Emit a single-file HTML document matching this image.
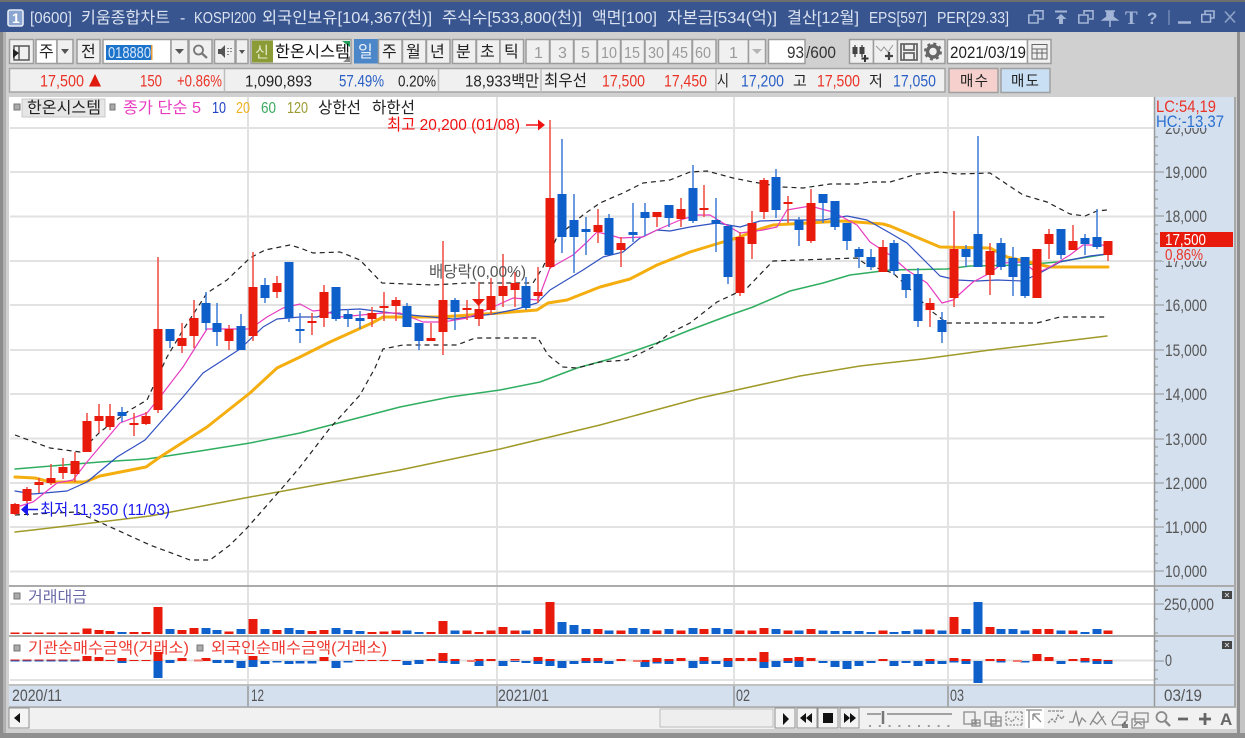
<!DOCTYPE html>
<html lang="ko"><head><meta charset="utf-8"><title>키움종합차트</title>
<style>
html,body{margin:0;padding:0;width:1245px;height:738px;overflow:hidden;background:#d0d0d0}
svg{display:block;font-family:"Liberation Sans","Noto Sans CJK KR",sans-serif;filter:blur(.3px)}
.b{fill:#f0f0f0;stroke:#9c9c9c;stroke-width:1.5}
.w{fill:#fff;stroke:#9c9c9c;stroke-width:1.5}
</style></head><body>
<svg width="1245" height="738" viewBox="0 0 1245 738" xmlns="http://www.w3.org/2000/svg">
<!-- window -->
<rect width="1245" height="738" fill="#d0d0d0"/>
<rect x="0" y="0" width="3" height="738" fill="#8c8c8c"/>
<rect x="3" y="32" width="3" height="706" fill="#b0b0b0"/>
<rect x="1237" y="32" width="3" height="706" fill="#8f8f8f"/>
<rect x="1240" y="32" width="5" height="706" fill="#c4c4c4"/>
<rect y="733" width="1245" height="5" fill="#8f8f8f"/>
<rect width="1245" height="2" fill="#6e6e6e"/>
<rect y="2" width="1245" height="30" fill="#385590"/>
<!-- title -->
<rect x="8" y="10" width="15" height="16" rx="2" fill="#8aa5d0" stroke="#e6ecf5" stroke-width="1.600"/>
<text x="12" y="23" font-size="14" font-weight="bold" fill="#fff">1</text>
<g fill="#dbe3f0" font-size="16">
<text x="30" y="23" textLength="42" lengthAdjust="spacingAndGlyphs">[0600]</text>
<text x="81" y="23" textLength="89" lengthAdjust="spacingAndGlyphs">키움종합차트</text>
<text x="180" y="23">-</text>
<text x="194" y="23" textLength="62" lengthAdjust="spacingAndGlyphs">KOSPI200</text>
<text x="262" y="23" textLength="170" lengthAdjust="spacingAndGlyphs">외국인보유[104,367(천)]</text>
<text x="442" y="23" textLength="140" lengthAdjust="spacingAndGlyphs">주식수[533,800(천)]</text>
<text x="592" y="23" textLength="65" lengthAdjust="spacingAndGlyphs">액면[100]</text>
<text x="667" y="23" textLength="110" lengthAdjust="spacingAndGlyphs">자본금[534(억)]</text>
<text x="787" y="23" textLength="72" lengthAdjust="spacingAndGlyphs">결산[12월]</text>
<text x="869" y="23" textLength="58" lengthAdjust="spacingAndGlyphs">EPS[597]</text>
<text x="937" y="23" textLength="72" lengthAdjust="spacingAndGlyphs">PER[29.33]</text>
</g>
<g fill="none" stroke="#a3b5d6" stroke-width="1.600">
<path d="M1034 14V10.800H1043V19H1038M1028.800 15H1038V23H1028.800Z"/>
<path d="M1055 11.500H1067" stroke-width="2"/>
<path d="M1061 14L1055.500 19H1059V24H1063V19H1066.500Z" fill="#a3b5d6" stroke="none"/>
<path d="M1084 14V10.800H1093V19H1089M1078.800 15H1088V23H1078.800Z"/>
<path d="M1105 11H1115M1107 11V17L1103 20H1117L1113 17V11ZM1110 20V27" fill="#a3b5d6"/>
<path d="M1169 10V25" stroke="#6f86b3"/>
<path d="M1178 22.500H1191" stroke-width="2.500"/>
<path d="M1205 14V11H1214V18H1211M1201.800 14.500H1210.500V22H1201.800Z"/>
<path d="M1225 11.500L1235 22.500M1235 11.500L1225 22.500" stroke="#8fa3c8"/>
</g>
<text x="1125" y="24" font-size="19" font-weight="bold" font-family="Liberation Serif,serif" fill="#a3b5d6">T</text>
<text x="1147" y="24" font-size="17" font-weight="bold" fill="#a3b5d6">?</text>

<!-- toolbar row 1 -->
<g>
<rect class="b" x="9.500" y="39.500" width="24" height="24"/>
<path d="M14 46H29V60H14ZM19 46V60" fill="none" stroke="#555" stroke-width="1.500"/><path d="M13 49L19 53L13 58Z" fill="#222"/>
<rect class="w" x="36" y="39.500" width="21" height="24"/><rect class="b" x="57" y="39.500" width="16" height="24"/>
<path d="M61 49H69L65 54Z" fill="#555"/>
<rect class="b" x="77" y="39.500" width="23" height="24"/>
<rect class="w" x="103" y="39.500" width="68" height="24"/>
<rect x="106" y="45" width="46" height="15" fill="#1b73cc"/>
<rect x="151" y="45" width="1.500" height="15" fill="#e79a3a"/>
<rect class="b" x="171" y="39.500" width="17" height="24"/><path d="M175 49H184L179.500 54Z" fill="#555"/>
<rect class="b" x="189" y="39.500" width="23" height="24"/>
<circle cx="198.500" cy="50" r="4.500" fill="none" stroke="#777" stroke-width="1.800"/><path d="M202 53.500L207 58" stroke="#777" stroke-width="2.200"/>
<rect class="b" x="214.500" y="39.500" width="20.500" height="24"/>
<path d="M218 49H221L225 45V58L221 54H218Z" fill="#555"/><path d="M228 48v1M231 48v1M228 51v1M231 51v1M228 54v1" stroke="#666" stroke-width="1.500"/>
<rect class="b" x="236" y="39.500" width="12" height="24"/><path d="M239 50H245L242 54Z" fill="#555"/>
<rect class="w" x="251" y="39.500" width="100" height="24"/>
<rect x="252" y="40.500" width="21" height="22" fill="#8b9b35"/>
<path d="M342 41H350V47Z" fill="#1fa25a"/><path d="M343 62L350 62L350 56Z" fill="#888"/>
<rect x="354" y="39" width="24" height="24.500" fill="#4a86c8"/>
<rect class="b" x="378.500" y="39.500" width="23.500" height="24"/>
<rect class="b" x="402.500" y="39.500" width="23.500" height="24"/>
<rect class="b" x="426.500" y="39.500" width="23.500" height="24"/>
<rect class="b" x="452.500" y="39.500" width="23.500" height="24"/>
<rect class="b" x="476.500" y="39.500" width="23.500" height="24"/>
<rect class="b" x="500" y="39.500" width="23.500" height="24"/>
<rect class="b" x="526" y="39.500" width="23.500" height="24"/>
<rect class="b" x="550" y="39.500" width="23.500" height="24"/>
<rect class="b" x="574" y="39.500" width="23" height="24"/>
<rect class="b" x="597.500" y="39.500" width="23" height="24"/>
<rect class="b" x="621" y="39.500" width="23.500" height="24"/>
<rect class="b" x="645" y="39.500" width="23" height="24"/>
<rect class="b" x="668.500" y="39.500" width="23.500" height="24"/>
<rect class="b" x="692.500" y="39.500" width="23.500" height="24"/>
<rect class="b" x="718.500" y="39.500" width="30" height="24"/>
<rect class="b" x="748.500" y="39.500" width="17" height="24"/><path d="M752 49H762L757 54Z" fill="#b4b4b4"/>
<rect class="w" x="768.500" y="39.500" width="36.500" height="24"/>
<rect class="b" x="849.500" y="39.500" width="24" height="24"/>
<rect class="b" x="873.500" y="39.500" width="24" height="24"/>
<rect class="b" x="897.500" y="39.500" width="24" height="24"/>
<rect class="b" x="921.500" y="39.500" width="23.500" height="24"/>
<rect class="w" x="947.500" y="39.500" width="80" height="24"/>
<rect class="b" x="1027.500" y="39.500" width="23.500" height="24"/>
<!-- candle add icon -->
<path d="M855 45V57M862 45V57" stroke="#333" stroke-width="1.200"/><path d="M852.500 47H857.500V54H852.500ZM859.500 47H864.500V54H859.500Z" fill="#444"/><path d="M865 55V62M861.500 58.500H868.500" stroke="#333" stroke-width="2"/>
<path d="M876 46L881 51L884 47L888 52L893 45" fill="none" stroke="#999"/><path d="M889 52V60M885 56H893" stroke="#444" stroke-width="2.200"/>
<path d="M901 44H917V60H901ZM904 44V50H914V44M904 60V53H914V60" fill="none" stroke="#666" stroke-width="1.800"/>
<circle cx="933" cy="51.500" r="5.500" fill="none" stroke="#666" stroke-width="3.500"/><circle cx="933" cy="51.500" r="8" fill="none" stroke="#666" stroke-width="2" stroke-dasharray="3 3.300"/>
<path d="M1032 44.500H1047V59H1032ZM1032 49H1047M1032 53H1047M1037 49V59M1042 49V59" fill="none" stroke="#666"/>
</g>
<g font-size="16" fill="#222">
<text x="39" y="57">주</text><text x="81" y="57">전</text>
<text x="108" y="58" fill="#dceaf8" textLength="43" lengthAdjust="spacingAndGlyphs">018880</text>
<text x="255" y="57" fill="#e8eccb" font-size="15">신</text>
<text x="275" y="57" textLength="75" lengthAdjust="spacingAndGlyphs" fill="#111">한온시스템</text>
<text x="358" y="57" fill="#e8f0fa">일</text><text x="382" y="57">주</text><text x="406" y="57">월</text><text x="430" y="57">년</text>
<text x="456" y="57">분</text><text x="480" y="57">초</text><text x="504" y="57">틱</text>
</g>
<g font-size="16" fill="#9a9a9a">
<text x="534" y="58">1</text><text x="558" y="58">3</text><text x="581" y="58">5</text>
<text x="601" y="58" textLength="16" lengthAdjust="spacingAndGlyphs">10</text><text x="624" y="58" textLength="16" lengthAdjust="spacingAndGlyphs">15</text><text x="648" y="58" textLength="16" lengthAdjust="spacingAndGlyphs">30</text><text x="672" y="58" textLength="16" lengthAdjust="spacingAndGlyphs">45</text><text x="695" y="58" textLength="16" lengthAdjust="spacingAndGlyphs">60</text>
<text x="729" y="58">1</text>
</g>
<g font-size="16.500" fill="#333">
<text x="787" y="58" textLength="17" lengthAdjust="spacingAndGlyphs">93</text>
<text x="806" y="58" textLength="30" lengthAdjust="spacingAndGlyphs">/600</text>
<text x="950" y="58" textLength="76" lengthAdjust="spacingAndGlyphs" fill="#222">2021/03/19</text>
</g>

<!-- toolbar row 2 -->
<rect x="9.500" y="68.500" width="935.500" height="23.500" fill="#f0f0f0" stroke="#a5a5a5" stroke-width="1.500"/>
<path d="M224.500 69V92M438.500 69V92M541 69V92M716 69V92" stroke="#bdbdbd" stroke-width="1.500"/>
<rect x="949" y="68.500" width="49" height="24" fill="#f5d0cc" stroke="#a0a0a0" stroke-width="1.500"/>
<rect x="1001" y="68.500" width="49" height="24" fill="#c8dff4" stroke="#a0a0a0" stroke-width="1.500"/>
<path d="M95 74L101 86.500H89Z" fill="#e01a0c"/>
<g font-size="16.500" fill="#ea3326">
<text x="40" y="86.500" textLength="44" lengthAdjust="spacingAndGlyphs">17,500</text>
<text x="140" y="86.500" textLength="22" lengthAdjust="spacingAndGlyphs">150</text>
<text x="177" y="86.500" textLength="45" lengthAdjust="spacingAndGlyphs">+0.86%</text>
<text x="602" y="86.500" textLength="43" lengthAdjust="spacingAndGlyphs">17,500</text>
<text x="664" y="86.500" textLength="43" lengthAdjust="spacingAndGlyphs">17,450</text>
<text x="817" y="86.500" textLength="43" lengthAdjust="spacingAndGlyphs">17,500</text>
</g>
<g font-size="16.500" fill="#2a5fc4">
<text x="339" y="86.500" textLength="45" lengthAdjust="spacingAndGlyphs">57.49%</text>
<text x="741" y="86.500" textLength="43" lengthAdjust="spacingAndGlyphs">17,200</text>
<text x="893" y="86.500" textLength="43" lengthAdjust="spacingAndGlyphs">17,050</text>
</g>
<g font-size="16" fill="#222">
<text x="245" y="86.500" textLength="67" lengthAdjust="spacingAndGlyphs">1,090,893</text>
<text x="398" y="86.500" textLength="38" lengthAdjust="spacingAndGlyphs">0.20%</text>
<text x="465" y="86.500" textLength="74" lengthAdjust="spacingAndGlyphs">18,933백만</text>
<text x="544" y="86" textLength="43" lengthAdjust="spacingAndGlyphs">최우선</text>
<text x="717" y="86" textLength="12" lengthAdjust="spacingAndGlyphs">시</text>
<text x="793" y="86" font-size="15">고</text><text x="869" y="86" font-size="15">저</text>
<text x="960" y="86" font-size="14.500" textLength="28" lengthAdjust="spacing">매수</text>
<text x="1011" y="86" font-size="14.500" textLength="28" lengthAdjust="spacing">매도</text>
</g>

<!-- chart frame -->
<rect x="9" y="97" width="1145" height="589" fill="#fff"/>
<rect x="1155" y="97" width="79" height="589" fill="#d5e0ef"/>
<rect x="9" y="686" width="1225" height="21" fill="#d5e0ef"/>
<g stroke="#e2e2e2" stroke-width="2" fill="none">
<path d="M10 128H1154M10 172H1154M10 216.500H1154M10 261H1154M10 305H1154M10 350H1154M10 394H1154M10 438.500H1154M10 483H1154M10 527H1154M10 571.500H1154M10 604H1154M10 660.500H1154M10 680H1154"/>
<path d="M248 97V685M497 97V685M734 97V685M948 97V685"/>
</g>
<!-- moving averages -->
<g fill="none" stroke-linejoin="round" stroke-linecap="round">
<polyline stroke="#a09a28" stroke-width="1.500" points="15,532 33,530 150,516 250,497 300,488 400,470 500,449 600,425 700,398 800,376 860,366 923,359 990,350 1057,342 1107,336"/>
<polyline stroke="#2fae60" stroke-width="1.500" points="15,469 100,462 147,459 200,451 250,443 300,433 350,420 400,407 450,397 500,390 540,382 577,368 610,359 637,350 660,342 690,330 730,315 753,307 790,291 823,283 850,275 890,270 947,269 970,266 1023,265 1057,262 1107,254"/>
<polyline stroke="#f5ae10" stroke-width="3" points="15,477 35,478 50,482 85,482 100,476 146,467 160,457 207,427 250,393 277,368 300,357 330,342 372,323 383,317 440,317 500,313 537,310 548,303 567,300 600,287 630,279 657,265 690,252 723,242 737,238 757,230 773,225 843,221 883,224 890,226 940,247 990,248 1007,257 1050,267 1108,267"/>
<polyline stroke="#3050c0" stroke-width="1.200" points="15,491 33,494 67,491 87,482 117,457 145,440 183,397 203,373 240,349 263,327 277,319 300,317 317,317 337,310 360,309 400,314 453,319 493,314 517,309 537,303 550,290 583,270 603,257 623,252 640,238 657,230 670,231 690,227 717,223 740,227 760,221 790,220 823,220 847,216 867,220 890,233 907,243 927,263 940,276 957,280 977,281 997,280 1023,281 1040,273 1060,262 1090,256 1107,254"/>
<polyline stroke="#e83cc0" stroke-width="1.200" points="20,506 33,502 57,483 73,480 87,462 103,443 120,423 133,418 147,413 160,397 183,367 207,329 250,329 267,317 283,308 300,304 313,311 323,310 340,317 383,313 400,313 423,322 443,322 467,318 493,307 513,298 538,300 550,268 573,255 586,243 597,232 610,235 620,238 643,237 657,230 680,220 697,215 710,215 723,223 740,233 763,230 777,227 787,210 810,206 833,212 857,225 870,242 890,255 907,270 927,283 942,303 953,300 973,282 990,273 1003,263 1023,262 1037,273 1050,267 1070,255 1083,245 1103,245 1108,250"/>
<g stroke="#222" stroke-width="1.200" stroke-dasharray="5 4" stroke-linecap="butt">
<polyline points="15,435 50,448 80,452 100,432 130,410 147,400 167,357 183,330 207,293 227,280 250,258 265,250 290,245 300,248 313,253 340,252 360,260 382,283 433,285 467,283 533,283 543,267 557,237 583,215 600,203 623,193 643,183 670,180 690,172 707,171 733,178 753,182 783,187 803,188 830,184 857,184 870,182 890,182 917,174 940,172 957,174 990,173 1023,195 1047,202 1070,214 1085,216 1097,211 1107,210"/>
<polyline points="15,515 77,512 117,530 150,545 190,560 210,560 230,545 247,528 283,487 300,467 330,428 360,395 375,368 383,349 403,345 457,345 475,338 538,338 548,355 563,367 577,368 600,362 627,360 653,347 670,333 690,323 717,302 747,288 773,261 857,258 867,265 893,273 913,292 930,310 947,323 990,323 1037,323 1060,317 1107,317"/>
</g>
</g>
<!-- wicks -->
<path stroke="#ef4a3e" stroke-width="1.500" fill="none" d="M15 503V515M27 487V503M39 478V493M51 464V485M63 458V479M75 452V482M87 413V452M99 404V433M110 404V430M134 413V436M146 412V425M158 257V413M182 323V353M194 300V348M229 325V350M253 252V341M277 276V298M312 313V335M324 285V327M372 307V327M384 292V321M396 297V321M431 323V341M443 241V355M467 300V320M479 282V326M491 278V315M503 254V307M515 272V307M538 267V303M550 120V269M598 209V243M621 237V267M657 212V227M681 198V227M704 185V217M740 232V296M752 211V259M764 178V219M788 196V223M811 189V243M883 240V272M930 298V327M954 211V307M990 243V295M1049 229V259M1073 225V250M1108 241V261"/>
<path stroke="#3d7ad6" stroke-width="1.500" fill="none" d="M122 407V422M170 329V348M206 292V330M217 303V346M241 314V350M265 278V303M289 262V322M300 313V343M336 287V321M348 309V327M360 311V329M407 303V327M419 323V350M455 298V330M526 277V310M562 139V253M574 194V273M586 217V255M609 214V255M633 203V242M645 203V236M669 205V227M693 165V223M716 198V252M728 226V284M776 169V218M799 217V246M823 194V223M835 201V230M847 223V250M859 247V268M871 249V270M894 240V275M906 274V298M918 268V327M942 312V343M966 245V267M978 136V267M1001 238V270M1013 247V296M1025 257V298M1061 229V259M1085 234V255M1097 209V249"/>
<!-- bodies -->
<path stroke="#e81a0c" stroke-width="9" fill="none" d="M15 504V514M27 489V501M39 482V485M51 478V483M63 467V473M75 461V474M87 421V452M99 416V421M110 416V427M134 423V425M146 416V424M158 329V410M182 338V346M194 318V336M229 329V341M253 287V336M277 283V292M312 321V323M324 292V318M372 313V319M384 306V308M396 300V306M431 338V341M443 300V332M467 308V310M479 309V319M491 296V310M503 286V296M515 283V290M538 292V296M550 198V267M598 225V232M621 243V250M657 212V217M681 209V219M704 208V210M740 237V293M752 223V244M764 180V212M788 202V204M811 203V241M883 247V272M930 303V310M954 249V298M990 251V275M1037 249V298M1049 234V244M1073 241V250M1108 241V255"/>
<path stroke="#0f5fcb" stroke-width="9" fill="none" d="M122 412V416M170 329V341M206 303V323M217 323V332M241 326V350M265 285V298M289 262V318M300 329V331M336 287V319M348 314V319M360 318V321M407 306V327M419 323V341M455 300V312M526 286V308M562 194V237M574 220V237M586 229V232M609 218V255M633 232V235M645 212V218M669 205V218M693 188V221M716 220V224M728 226V277M776 177V210M799 220V230M823 194V203M835 201V227M847 223V241M859 249V257M871 257V267M894 243V271M906 274V290M918 274V321M942 320V332M966 249V257M978 234V267M1001 243V267M1013 258V277M1025 257V296M1061 229V255M1085 238V244M1097 237V247"/>
<!-- markers -->
<path d="M472 299H485L478.500 306Z" fill="#e81a0c"/>
<path d="M526 125H540" stroke="#f01010" stroke-width="1.500"/><path d="M538 119.500L545 125L538 130.500Z" fill="#f01010"/>
<path d="M25 509.500H38" stroke="#1a1aee" stroke-width="1.500"/><path d="M28 503L21 509.500L28 516Z" fill="#1a1aee"/>
<text x="387" y="130" font-size="16" fill="#f01010" textLength="133" lengthAdjust="spacingAndGlyphs">최고 20,200 (01/08)</text>
<text x="40" y="515" font-size="16" fill="#1a1aee" textLength="130" lengthAdjust="spacingAndGlyphs">최저 11,350 (11/03)</text>
<text x="429" y="277" font-size="16" fill="#555" textLength="97" lengthAdjust="spacingAndGlyphs">배당락(0,00%)</text>
<!-- legend -->
<rect x="14" y="104" width="6" height="6" fill="#aaa" stroke="#777"/>
<rect x="22" y="99" width="83" height="18" fill="#e6e6e6" stroke="#c8c8c8"/>
<rect x="110" y="104" width="5" height="6" fill="#aaa" stroke="#777"/>
<g font-size="16">
<text x="27" y="113" fill="#222" textLength="74" lengthAdjust="spacingAndGlyphs">한온시스템</text>
<text x="123" y="113" fill="#e83cc0" textLength="78" lengthAdjust="spacingAndGlyphs">종가 단순 5</text>
<text x="212" y="113" fill="#2040c8" textLength="14" lengthAdjust="spacingAndGlyphs">10</text>
<text x="236" y="113" fill="#f0b020" textLength="14" lengthAdjust="spacingAndGlyphs">20</text>
<text x="261" y="113" fill="#3aa860" textLength="15" lengthAdjust="spacingAndGlyphs">60</text>
<text x="287" y="113" fill="#9a9a30" textLength="21" lengthAdjust="spacingAndGlyphs">120</text>
<text x="318" y="113" fill="#222" textLength="43" lengthAdjust="spacingAndGlyphs">상한선</text>
<text x="372" y="113" fill="#222" textLength="43" lengthAdjust="spacingAndGlyphs">하한선</text>
</g>
<!-- separators -->
<path d="M9 586H1234M9 636H1234" stroke="#ababab" stroke-width="2"/>
<path d="M9 685H1234" stroke="#ababab" stroke-width="1.500"/>
<!-- pane labels -->
<rect x="14" y="593" width="6" height="6" fill="#aaa" stroke="#777"/>
<text x="28" y="602" font-size="15.500" fill="#6a6aa8" textLength="59" lengthAdjust="spacingAndGlyphs">거래대금</text>
<rect x="14" y="645" width="6" height="6" fill="#aaa" stroke="#777"/>
<rect x="197" y="645" width="6" height="6" fill="#aaa" stroke="#777"/>
<text x="28" y="653" font-size="15.500" fill="#ee3a30" textLength="161" lengthAdjust="spacingAndGlyphs">기관순매수금액(거래소)</text>
<text x="211" y="653" font-size="15.500" fill="#ee3a30" textLength="176" lengthAdjust="spacingAndGlyphs">외국인순매수금액(거래소)</text>
<!-- volume -->
<path stroke="#e81a0c" stroke-width="9" fill="none" d="M15 634V632.500M27 634V632.500M39 634V632.500M51 634V632.500M63 634V632.500M75 634V632.500M87 634V628.500M99 634V630M110 634V631M134 634V632M146 634V632M158 634V607M182 634V630M194 634V628M229 634V631.500M253 634V619M277 634V630M312 634V631M324 634V630M372 634V632M384 634V631.500M396 634V630.500M431 634V632M443 634V621M467 634V630.500M479 634V632M491 634V630.500M503 634V627M515 634V630.500M538 634V629M550 634V602M598 634V629M621 634V630.500M657 634V630.500M681 634V630.500M704 634V629M740 634V630.500M752 634V630.500M764 634V628M788 634V630.500M811 634V629M883 634V630.500M930 634V629.500M954 634V617M990 634V627M1037 634V629M1049 634V629M1073 634V630.500M1108 634V630.500"/>
<path stroke="#0f62cc" stroke-width="9" fill="none" d="M122 634V632M170 634V629M206 634V628M217 634V630M241 634V629M265 634V629M289 634V628M300 634V630M336 634V628M348 634V630M360 634V631M407 634V630.500M419 634V632M455 634V630.500M526 634V630.500M562 634V622M574 634V625M586 634V629M609 634V630.500M633 634V628M645 634V629M669 634V629M693 634V628M716 634V628M728 634V629M776 634V629M799 634V630.500M823 634V630.500M835 634V631M847 634V631M859 634V631M871 634V632M894 634V632M906 634V631M918 634V629.500M942 634V630.500M966 634V629M978 634V602M1001 634V629M1013 634V629M1025 634V630.500M1061 634V630.500M1085 634V632M1097 634V629"/>
<!-- net buy -->
<path stroke="#0f5fcb" stroke-width="9" fill="none" d="M15 660.500V661.500M27 660.500V661.500M39 660.500V661.500M51 660.500V661.500M63 660.500V661.500M75 660.500V661.500M122 661V663M158 661V678M170 660V663M217 660V663M229 660V663M241 661V668M253 660V667M265 661V664M277 661V662.500M289 661V664M300 661V663.500M312 661V663.500M336 661V668M348 661V662.500M407 661V665M419 660V664M443 661V663M455 661V664M479 661V666M503 661V666M515 661V662M526 661V663M538 661V664M550 661V666M562 661V668M574 661V664M586 661V663M598 661V663M609 661V664M645 662V667M657 662V663.500M669 661V664M693 661V668M704 661V664M716 661V664M728 661V667M764 662V668M776 661V667M788 661V663M799 661V667M823 661V663M835 661V667M847 661V669M859 661V666M871 661V663M894 661V666M906 661V663M918 661V666M930 661V664M942 661V664M954 661V662.500M966 661V664M978 661V683M1001 661V662.500M1025 661V662.500M1061 661V664M1085 661V662.500M1097 661V664M1108 661V664"/>
<path stroke="#e81a0c" stroke-width="9" fill="none" d="M15 659.500V660.500M27 659.500V660.500M39 659.500V660.500M51 659.500V660.500M63 659.500V660.500M75 659.500V660.500M87 656V661M99 657V661M110 660V661M122 658V661M134 660V661M146 660V661M158 652V661M182 658V661M206 658V661M253 656V660M324 657V661M360 660V661M372 660V661M384 660V661M396 660V661M431 659V661M443 653V661M455 659V661M479 659V661M491 659V661M515 659V660.500M538 657V661M550 659V661M586 658V661M598 658V661M621 659V661M645 660V662M657 658V662M669 659V661M681 658V661M704 657V661M728 658V661M740 658V661M752 658V661M764 652V662M788 658V661M799 657V661M811 658V661M883 659V661M930 659V661M954 658V661M966 659V661M990 659V661M1001 659V661M1037 654V661M1049 657V661M1073 659V661M1085 658V661M1097 659V661M1108 660V661"/>
<path stroke="#f07a70" stroke-width="2" fill="none" d="M194 660.500h9M467 661h9M633 661h9M1013 661h9"/>
<!-- axis -->
<path d="M1154.500 97V686M1235 97V707" stroke="#9a9a9a" stroke-width="1.500" fill="none"/>
<path stroke="#8f8f8f" fill="none" d="M1155 137H1158M1155 146H1158M1155 155H1158M1155 164H1158M1155 172H1164M1155 181H1158M1155 190H1158M1155 199H1158M1155 208H1158M1155 216H1164M1155 225H1158M1155 234H1158M1155 243H1158M1155 252H1158M1155 261H1164M1155 270H1158M1155 279H1158M1155 287H1158M1155 296H1158M1155 305H1164M1155 314H1158M1155 323H1158M1155 332H1158M1155 341H1158M1155 350H1164M1155 359H1158M1155 367H1158M1155 376H1158M1155 385H1158M1155 394H1164M1155 403H1158M1155 412H1158M1155 421H1158M1155 430H1158M1155 439H1164M1155 447H1158M1155 456H1158M1155 465H1158M1155 474H1158M1155 483H1164M1155 492H1158M1155 501H1158M1155 510H1158M1155 519H1158M1155 527H1164M1155 536H1158M1155 545H1158M1155 554H1158M1155 563H1158M1155 571H1164M1155 590H1158M1155 604H1164M1155 619H1158M1155 633H1158M1155 641H1158M1155 651H1158M1155 661H1164M1155 670H1158M1155 679H1158"/>
<g font-size="16.500" fill="#555">
<text x="1165" y="134" textLength="42" lengthAdjust="spacingAndGlyphs">20,000</text>
<text x="1165" y="178" textLength="42" lengthAdjust="spacingAndGlyphs">19,000</text>
<text x="1165" y="222" textLength="42" lengthAdjust="spacingAndGlyphs">18,000</text>
<text x="1165" y="267" textLength="42" lengthAdjust="spacingAndGlyphs">17,000</text>
<text x="1165" y="311" textLength="42" lengthAdjust="spacingAndGlyphs">16,000</text>
<text x="1165" y="356" textLength="42" lengthAdjust="spacingAndGlyphs">15,000</text>
<text x="1165" y="400" textLength="42" lengthAdjust="spacingAndGlyphs">14,000</text>
<text x="1165" y="445" textLength="42" lengthAdjust="spacingAndGlyphs">13,000</text>
<text x="1165" y="489" textLength="42" lengthAdjust="spacingAndGlyphs">12,000</text>
<text x="1165" y="533" textLength="42" lengthAdjust="spacingAndGlyphs">11,000</text>
<text x="1165" y="577" textLength="42" lengthAdjust="spacingAndGlyphs">10,000</text>
<text x="1164" y="610" textLength="50" lengthAdjust="spacingAndGlyphs">250,000</text>
<text x="1165" y="666" textLength="7" lengthAdjust="spacingAndGlyphs">0</text>
<text x="1164" y="701" textLength="38" lengthAdjust="spacingAndGlyphs">03/19</text>
<text x="12" y="701" textLength="50" lengthAdjust="spacingAndGlyphs">2020/11</text>
<text x="251" y="701" textLength="13" lengthAdjust="spacingAndGlyphs">12</text>
<text x="498" y="701" textLength="51" lengthAdjust="spacingAndGlyphs">2021/01</text>
<text x="736" y="701" textLength="14" lengthAdjust="spacingAndGlyphs">02</text>
<text x="950" y="701" textLength="14" lengthAdjust="spacingAndGlyphs">03</text>
</g>
<path d="M248 686V707M497 686V707M734 686V707M948 686V707M1154.500 686V707" stroke="#9a9a9a" stroke-width="1.500"/>
<path d="M9 707H1236" stroke="#a8a8a8" stroke-width="1.500"/>
<rect x="1156" y="98" width="78" height="30" fill="#d5e0ef"/>
<text x="1156" y="112" font-size="17" fill="#ea3326" textLength="60" lengthAdjust="spacingAndGlyphs">LC:54,19</text>
<text x="1156" y="127" font-size="17" fill="#2a6fd0" textLength="68" lengthAdjust="spacingAndGlyphs">HC:-13,37</text>
<rect x="1160" y="232" width="73" height="15" fill="#e81a0c"/>
<text x="1165" y="245" font-size="16" fill="#fff" textLength="41" lengthAdjust="spacingAndGlyphs">17,500</text>
<rect x="1162" y="248" width="60" height="13" fill="#d5e0ef"/>
<text x="1165" y="260" font-size="16" fill="#ea3326" textLength="38" lengthAdjust="spacingAndGlyphs">0,86%</text>
<rect x="1222" y="591" width="10" height="8" fill="#444"/><rect x="1222" y="641" width="10" height="8" fill="#444"/>
<path d="M1225 593L1229 597M1229 593L1225 597M1225 643L1229 647M1229 643L1225 647" stroke="#ccc"/>

<!-- scrollbar row -->
<rect x="9" y="708" width="1227" height="21" fill="#f1f1f1"/>
<rect x="9" y="708" width="20" height="20" fill="#f4f4f4" stroke="#8f8f8f"/>
<path d="M20 713L14 718L20 723Z" fill="#111"/>
<rect x="660" y="709" width="113" height="18" fill="#eee" stroke="#bdbdbd"/>
<rect x="775" y="708" width="20" height="20" fill="#f4f4f4" stroke="#8f8f8f"/>
<rect x="797" y="708" width="20" height="20" fill="#f4f4f4" stroke="#8f8f8f"/>
<rect x="818" y="708" width="20" height="20" fill="#f4f4f4" stroke="#8f8f8f"/>
<rect x="840" y="708" width="19" height="20" fill="#f4f4f4" stroke="#8f8f8f"/>
<path d="M783 713L789 719L783 725Z M806 713L800 718L806 723ZM812 713L806 718L812 723ZM823 713H833V723H823ZM844 713L850 718L844 723ZM850 713L856 718L850 723Z" fill="#111"/>
<path d="M867 714H881M887 714H952" stroke="#888" stroke-width="1.500"/>
<path d="M883 711V724" stroke="#777" stroke-width="2.500"/>
<path stroke="#666" stroke-width="1.300" stroke-dasharray="2 7.800" d="M869 726H953"/>
<rect x="1025" y="708" width="19" height="20" fill="#fff"/>
<g fill="none" stroke="#8a8a8a" stroke-width="1.300">
<path d="M964 712H975V724H964ZM972 720H980V726H972ZM976 720V726M972 723H980"/>
<path d="M985 712H996V724H985ZM991 717H1001V726H991ZM991 721H1001"/>
<path d="M1006 712H1022M1006 725H1022M1006 712V725M1022 712V725M1008 718L1012 722L1016 717L1020 721" stroke-dasharray="2 1.500"/>
<path d="M1026 710H1042M1029 710V728M1033 714H1040M1033 714V720M1033 714L1041 722"/>
<path d="M1048 723L1052 719L1055 722L1058 715L1062 719L1064 716M1048 711H1064" stroke-dasharray="3 1"/>
<path d="M1069 722H1073L1076 712L1079 725L1082 718L1086 722"/>
<path d="M1090 725L1098 712L1106 725M1092 720L1097 724L1104 716"/>
<path d="M1112 721L1118 712H1127V720L1122 725H1113ZM1118 717H1127"/><path d="M1123 724V728M1125 722V728M1127 724V728" stroke="#444"/>
<path d="M1135 713H1148V722H1135ZM1132 719H1144V728H1132ZM1134 726L1138 722L1142 725"/>
<circle cx="1161.500" cy="717" r="5" stroke-width="1.800"/><path d="M1165 721L1170 726" stroke-width="2.500"/>
<path d="M1178 719H1188M1199 719H1211M1205 713V725" stroke="#666" stroke-width="2.800"/>
</g>
<text x="1220" y="725" font-size="17" font-weight="bold" fill="#666">A</text>
</svg>
</body></html>
